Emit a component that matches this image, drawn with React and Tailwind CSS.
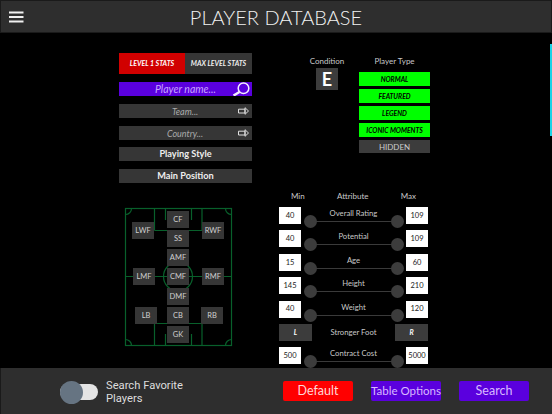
import React from "react";

const gothic = "font-['Lato','Open_Sans',sans-serif]";

function Arrow() {
  return (
    <svg width="11" height="8" viewBox="0 0 11 8" fill="none" stroke="#ddd" strokeWidth="1">
      <path d="M0.5 2.2h6.5V6H0.5z" />
      <path d="M7 0.7V7.3L10.5 4z" />
    </svg>
  );
}

function Rect({ label, italic, children, bold }) {
  return (
    <div className={`relative h-[14px] bg-[#363636] flex items-center justify-center leading-none ${bold ? "text-[9.2px] font-bold text-[#eee]" : "text-[9px] text-[#aaa]"} ${italic ? "italic" : ""}`}>
      <span className={bold ? "" : "pr-[1px]"}>{label}</span>
      {children}
    </div>
  );
}

function TypeBtn({ label }) {
  return (
    <div className="h-[14px] bg-[#00ff00] text-black italic font-bold text-[6.8px] flex items-center justify-center leading-none">
      {label}
    </div>
  );
}

function Pos({ label, x, y }) {
  return (
    <div
      className="absolute w-[22px] h-[17px] bg-[#363636] text-[#d0d0d0] text-[7.5px] flex items-center justify-center"
      style={{ left: x, top: y }}
    >
      {label}
    </div>
  );
}

function Pitch() {
  const c = "#08602b";
  return (
    <div className="relative w-[140px] h-[160px] mt-[17px] ml-[-9px]">
      <svg className="absolute inset-0" width="140" height="160" fill="none" stroke={c} strokeWidth="1.2">
        <rect x="15.5" y="8.5" width="106" height="137" />
        <path d="M44.5 8.5V30.5M92 8.5V30.5M44.5 30.5H92" />
        <path d="M55.5 8.5V20M81.5 8.5V20" />
        <path d="M44.5 145V123M92 145V123M44.5 123.5H92" />
        <path d="M55.5 145V134M81.5 145V134" />
        <path d="M15.5 76.5H121.5" />
        <circle cx="68" cy="76.5" r="14.5" />
        <path d="M15.5 14.5A6 6 0 0 0 21.5 8.5M121.5 14.5A6 6 0 0 1 115.5 8.5M15.5 139.5A6 6 0 0 1 21.5 145.5M121.5 139.5A6 6 0 0 0 115.5 145.5" />
      </svg>
      <Pos label="CF" x={57} y={11} />
      <Pos label="LWF" x={22} y={22} />
      <Pos label="RWF" x={92} y={22} />
      <Pos label="SS" x={57} y={30} />
      <Pos label="AMF" x={57} y={49} />
      <Pos label="LMF" x={23} y={68} />
      <Pos label="CMF" x={57} y={68} />
      <Pos label="RMF" x={92} y={68} />
      <Pos label="DMF" x={57} y={88} />
      <Pos label="LB" x={25} y={107} />
      <Pos label="CB" x={57} y={107} />
      <Pos label="RB" x={91} y={107} />
      <Pos label="GK" x={57} y={126} />
    </div>
  );
}

function ValueBox({ v }) {
  return (
    <div className="w-[22px] h-[17px] bg-white text-[#222] text-[7.5px] flex items-center justify-center shrink-0">
      {v}
    </div>
  );
}

function Knob() {
  return <div className="w-[13px] h-[13px] rounded-full bg-[#3c3c3c] shrink-0 mt-[8px]" />;
}

function AttrRow({ min, max, label }) {
  return (
    <div className="flex items-start h-[17px] mb-[6.4px]">
      <ValueBox v={min} />
      <div className="relative flex-1 flex justify-between pl-[3px] pr-[2px] h-[17px]">
        <div className="absolute left-[10px] right-[8px] top-[14px] h-[1px] bg-[#3a3a3a]" />
        <div className="relative flex justify-between w-full">
          <Knob />
          <Knob />
        </div>
        <div className="absolute inset-x-0 top-0 text-center text-[7.7px] leading-[12px] text-[#c8c8c8]">{label}</div>
      </div>
      <ValueBox v={max} />
    </div>
  );
}

export default function App() {
  return (
    <div className={`w-[552px] h-[414px] bg-black overflow-hidden flex flex-col relative ${gothic}`}>
      <header className="h-[33px] shrink-0 bg-[#2e2e2e] border border-[#1a1a1a] flex items-center justify-center relative">
        <svg className="absolute left-[8px] top-[10px]" width="15" height="12" viewBox="0 0 15 12" fill="#f0f0f0">
          <rect x="0" y="0.5" width="14.5" height="2" />
          <rect x="0" y="5" width="14.5" height="2" />
          <rect x="0" y="9.5" width="14.5" height="2" />
        </svg>
        <h1 className="text-[20px] font-light text-[#f2f2f2] leading-none">PLAYER DATABASE</h1>
      </header>

      <main className="flex-1 min-h-0 flex overflow-hidden relative">
        <div className="w-[133px] ml-[119px] pt-[20px] shrink-0">
          <div className="flex h-[21px] text-[7px] italic font-bold leading-none">
            <div className="w-[66px] bg-[#d10000] text-white flex items-center justify-center">LEVEL 1 STATS</div>
            <div className="flex-1 bg-[#363636] text-[#eee] flex items-center justify-center">MAX LEVEL STATS</div>
          </div>
          <div className="relative mt-[8px] h-[14px] bg-[#5a00de] text-[#c8a4ff] italic text-[10.5px] flex items-center justify-center leading-none">
            <span>Player name...</span>
            <svg className="absolute right-[2px] top-0" width="18" height="14" viewBox="0 0 18 14" fill="none" stroke="#f4eeff">
              <circle cx="11.5" cy="6.3" r="5.3" strokeWidth="1.5" />
              <path d="M7.5 10L1.5 13.5" strokeWidth="2.5" />
            </svg>
          </div>
          <div className="mt-[8px]"><Rect label="Team..." italic><span className="absolute right-[3px] top-[3px]"><Arrow /></span></Rect></div>
          <div className="mt-[8px]"><Rect label="Country..." italic><span className="absolute right-[3px] top-[3px]"><Arrow /></span></Rect></div>
          <div className="mt-[7px]"><Rect label="Playing Style" bold /></div>
          <div className="mt-[8px]"><Rect label="Main Position" bold /></div>
          <Pitch />
        </div>

        <div className="ml-[27px] w-[149px] shrink-0">
          <div className="flex pt-[23px]">
            <div className="w-[22px] ml-[37px] shrink-0 flex flex-col items-center">
              <div className="h-[10px] text-[8px] leading-[10px] text-[#c8c8c8] whitespace-nowrap">Condition</div>
              <div className="mt-[2px] w-[22px] h-[22px] bg-[#3c3c3c] text-white font-bold text-[18px] flex items-center justify-center leading-none">E</div>
            </div>
            <div className="ml-[21px] w-[71px] shrink-0">
              <div className="h-[10px] text-[8px] leading-[10px] text-center text-[#c8c8c8]">Player Type</div>
              <div className="mt-[6px] flex flex-col gap-[3px]">
                <TypeBtn label="NORMAL" />
                <TypeBtn label="FEATURED" />
                <TypeBtn label="LEGEND" />
                <TypeBtn label="ICONIC MOMENTS" />
                <div className="h-[13px] bg-[#3c3c3c] text-[#ccc] text-[8px] flex items-center justify-center leading-none">HIDDEN</div>
              </div>
            </div>
          </div>

          <div className="mt-[38px] w-[149px]">
            <div className="flex justify-between text-[8px] leading-[10px] text-[#c8c8c8] h-[16px] px-[12px]">
              <span>Min</span>
              <span>Attribute</span>
              <span>Max</span>
            </div>
            <AttrRow min="40" max="109" label="Overall Rating" />
            <AttrRow min="40" max="109" label="Potential" />
            <AttrRow min="15" max="60" label="Age" />
            <AttrRow min="145" max="210" label="Height" />
            <AttrRow min="40" max="120" label="Weight" />
            <div className="flex items-center h-[17px] mb-[6.4px]">
              <div className="w-[33px] h-[17px] bg-[#3c3c3c] text-white italic font-bold text-[7px] flex items-center justify-center">L</div>
              <div className="flex-1 text-center text-[7.7px] text-[#c8c8c8]">Stronger Foot</div>
              <div className="w-[33px] h-[17px] bg-[#3c3c3c] text-white italic font-bold text-[7px] flex items-center justify-center">R</div>
            </div>
            <AttrRow min="500" max="5000" label="Contract Cost" />
          </div>
        </div>
        <div className="absolute left-[549.5px] top-[11px] w-[2px] h-[92px] bg-[#19d3e6]" />
      </main>

      <footer className="h-[46px] shrink-0 bg-[#2e2e2e] border-l border-[#1a1a1a] flex items-center relative">
        <div className="relative ml-[59px] mt-[2px] w-[38px] h-[16px] rounded-full bg-[#e4e4e4] shrink-0">
          <div className="absolute left-0 top-[-3.5px] w-[23px] h-[23px] rounded-full bg-[#667482]" />
        </div>
        <div className="ml-[8px] w-[87px] font-['Roboto',sans-serif] text-[11.2px] leading-[13px] text-[#ddd] mt-[2px]">Search Favorite Players</div>
        <div className="ml-[90px] flex gap-[18px] text-[12.5px] leading-none">
          <button className="w-[70px] h-[20px] rounded-[2px] bg-[#ff0000] text-[#ffd8d8]">Default</button>
          <button className="w-[70px] h-[20px] rounded-[2px] bg-[#5a00de] text-[#d8b8ff] text-[11.5px] whitespace-nowrap">Table Options</button>
          <button className="w-[70px] h-[20px] rounded-[2px] bg-[#5a00de] text-[#d8b8ff]">Search</button>
        </div>
      </footer>
    </div>
  );
}
